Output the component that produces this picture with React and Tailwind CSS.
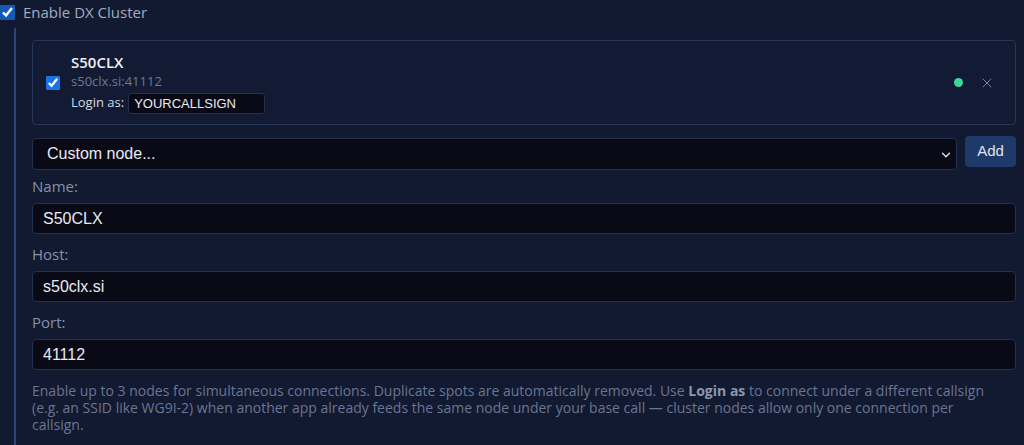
import React, { useState } from "react";
import { X, ChevronDown } from "lucide-react";

const ui = { fontFamily: '"Open Sans", "Noto Sans", sans-serif' };
const arial = { fontFamily: '"Liberation Sans", Arial, sans-serif' };

function Field({ label, value, first }) {
  return (
    <div className="flex flex-col">
      <label
        className={`text-[15px] leading-[20px] text-[#8891ab] mb-[7px] ${first ? "mt-[6px]" : "mt-[10px]"}`}
        style={ui}
      >
        {label}
      </label>
      <input
        defaultValue={value}
        className="h-[31px] w-full rounded-[4px] border border-[#22314f] bg-[#0a0a17] px-[10px] text-[16px] text-[#e8eaf0] outline-none"
        style={arial}
      />
    </div>
  );
}

export default function App() {
  const [enabled, setEnabled] = useState(true);
  const [nodeOn, setNodeOn] = useState(true);

  return (
    <div className="h-[445px] w-[1024px] overflow-hidden bg-[#111a30]" style={ui}>
      {/* Header */}
      <label className="flex h-[24px] items-center gap-[8px]">
        <input
          type="checkbox"
          checked={enabled}
          onChange={() => setEnabled(!enabled)}
          className="m-0 h-[15px] w-[15px] accent-[#1a73e8]"
        />
        <span className="text-[15px] text-[#a3abc2]">Enable DX Cluster</span>
      </label>

      <div className="ml-[14px] mt-[4px] h-full border-l-[2px] border-[#2a4677] bg-[#111a30] pl-[16px] pr-[8px] pt-[12px]">
        {/* Node card */}
        <div className="flex h-[85px] items-center rounded-[4px] border border-[#273859] bg-[#121b33] pl-[13px] pr-[20px]">
          <input
            type="checkbox"
            checked={nodeOn}
            onChange={() => setNodeOn(!nodeOn)}
            className="m-0 h-[14px] w-[14px] accent-[#1a73e8]"
          />
          <div className="ml-[11px] flex flex-1 flex-col">
            <div className="text-[15px] font-semibold leading-[20px] text-[#eef0f5]">S50CLX</div>
            <div className="text-[13px] leading-[18px] text-[#6f7891]">s50clx.si:41112</div>
            <div className="mt-[3px] flex items-center gap-[4px]">
              <span className="text-[13px] text-[#d6dae4]">Login as:</span>
              <input
                defaultValue="YOURCALLSIGN"
                className="h-[21px] w-[137px] rounded-[3px] border border-[#22314f] bg-[#0a0a17] px-[5px] text-[13px] text-[#e8eaf0] outline-none"
                style={arial}
              />
            </div>
          </div>
          <span className="h-[9px] w-[9px] rounded-full bg-[#3fd69a]" />
          <button className="ml-[16px] text-[#7c859c]">
            <X size={16} strokeWidth={1.5} />
          </button>
        </div>

        {/* Node select */}
        <div className="mt-[13px] flex items-start gap-[8px]">
          <div className="relative flex-1">
            <select
              className="h-[32px] w-full appearance-none rounded-[4px] border border-[#22314f] bg-[#0a0a17] pl-[14px] text-[16px] text-[#e8eaf0] outline-none"
              style={arial}
            >
              <option>Custom node...</option>
            </select>
            <ChevronDown
              size={14}
              strokeWidth={2.5}
              className="pointer-events-none absolute right-[4px] top-[10px] text-[#d8dbe4]"
            />
          </div>
          <button
            className="-mt-[2px] h-[31px] w-[51px] rounded-[4px] bg-[#1d3a68] text-[15px] text-[#dfe5f0]"
            style={arial}
          >
            Add
          </button>
        </div>

        <Field label="Name:" value="S50CLX" first />
        <Field label="Host:" value="s50clx.si" />
        <Field label="Port:" value="41112" />

        <p className="mt-[12px] pr-[20px] text-[14px] leading-[17px] text-[#6b7592]">
          Enable up to 3 nodes for simultaneous connections. Duplicate spots are automatically removed. Use{" "}
          <b className="font-bold text-[#8d96ae]">Login as</b> to connect under a different callsign (e.g. an SSID
          like WG9I-2) when another app already feeds the same node under your base call — cluster nodes allow only
          one connection per callsign.
        </p>
      </div>
    </div>
  );
}
